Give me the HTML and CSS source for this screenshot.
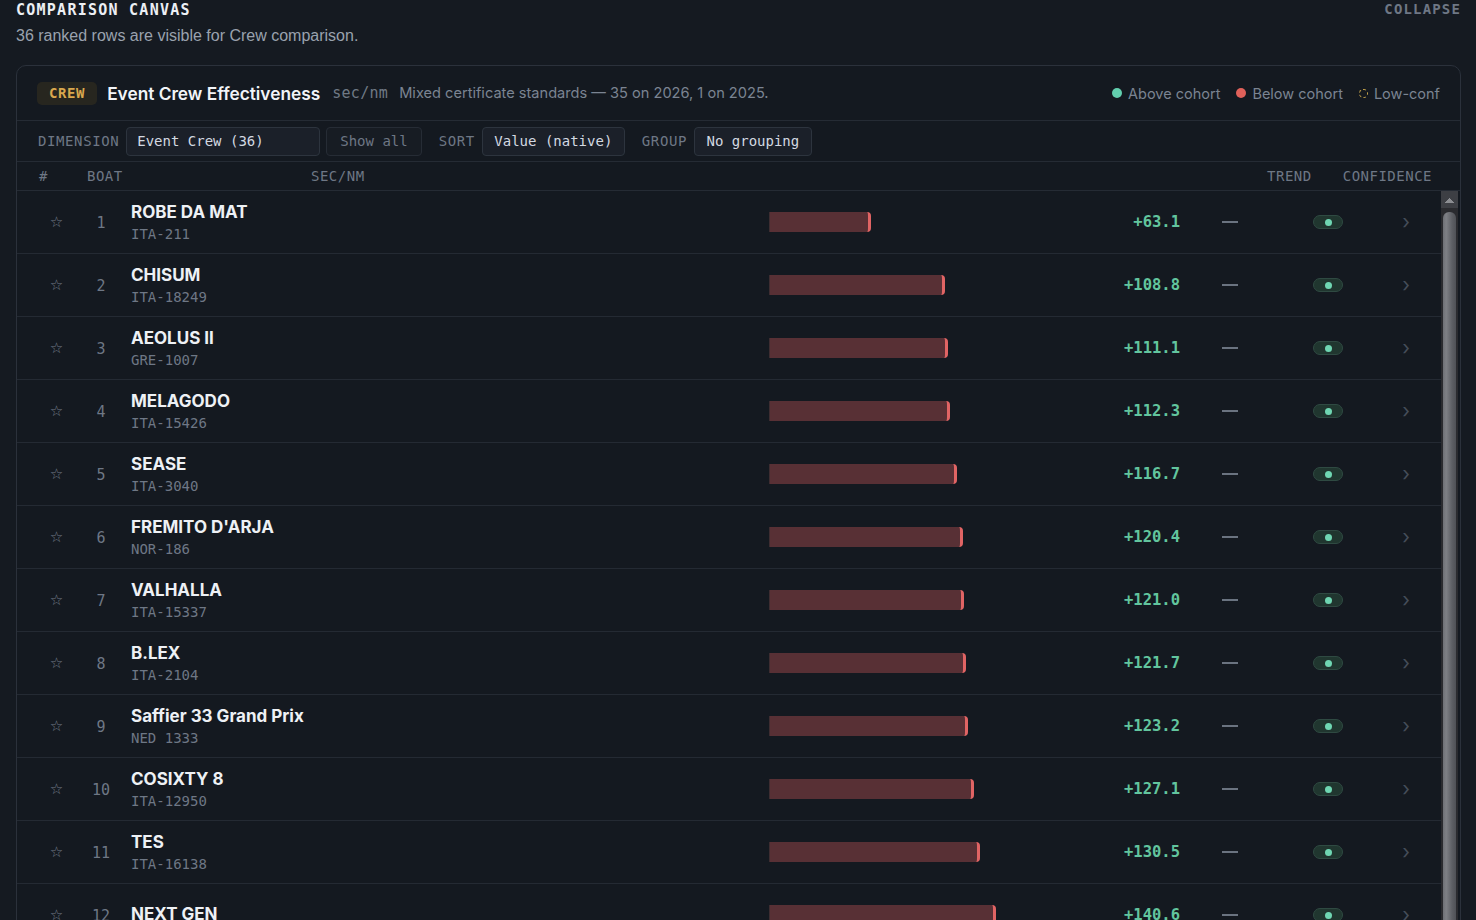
FILE: index.html
```html
<!DOCTYPE html>
<html lang="en">
<head>
    <meta charset="UTF-8">
    <meta name="viewport" content="width=device-width, initial-scale=1.0">
    <title>Comparison Canvas</title>
    <link rel="stylesheet" href="styles.css">
</head>
<body>
    <div class="canvas-head">
        <div>
            <h2 class="canvas-title">COMPARISON CANVAS</h2>
            <p class="canvas-sub">36 ranked rows are visible for Crew comparison.</p>
        </div>
        <button class="collapse">COLLAPSE</button>
    </div>

    <section class="card">
        <header class="card-head">
            <span class="badge">CREW</span>
            <h3 class="card-title">Event Crew Effectiveness</h3>
            <span class="unit">sec/nm</span>
            <span class="desc">Mixed certificate standards — 35 on 2026, 1 on 2025.</span>
            <div class="legend">
                <span class="legend-item"><i class="dot above"></i>Above cohort</span>
                <span class="legend-item"><i class="dot below"></i>Below cohort</span>
                <span class="legend-item"><i class="dot lowconf"></i>Low-conf</span>
            </div>
        </header>

        <div class="toolbar">
            <span class="tool-label">DIMENSION</span>
            <span class="tool-box wide">Event Crew (36)</span>
            <span class="tool-box muted">Show all</span>
            <span class="tool-label spaced">SORT</span>
            <span class="tool-box">Value (native)</span>
            <span class="tool-label spaced">GROUP</span>
            <span class="tool-box">No grouping</span>
        </div>

        <div class="cols">
            <span class="col-rank">#</span>
            <span class="col-boat">BOAT</span>
            <span class="col-metric">SEC/NM</span>
            <span class="col-trend">TREND</span>
            <span class="col-conf">CONFIDENCE</span>
        </div>

        <div class="list-wrap">
            <div class="rows" id="rows"></div>
            <div class="scrollbar">
                <span class="sb-up"></span>
                <span class="sb-thumb"></span>
            </div>
        </div>
    </section>

    <script>
        let boats = [
            ["ROBE DA MAT", "ITA-211", 63.1],
            ["CHISUM", "ITA-18249", 108.8],
            ["AEOLUS II", "GRE-1007", 111.1],
            ["MELAGODO", "ITA-15426", 112.3],
            ["SEASE", "ITA-3040", 116.7],
            ["FREMITO D'ARJA", "NOR-186", 120.4],
            ["VALHALLA", "ITA-15337", 121.0],
            ["B.LEX", "ITA-2104", 121.7],
            ["Saffier 33 Grand Prix", "NED 1333", 123.2],
            ["COSIXTY 8", "ITA-12950", 127.1],
            ["TES", "ITA-16138", 130.5],
            ["NEXT GEN", "", 140.6]
        ];

        let html = '';
        boats.forEach(function(b, i) {
            html += '<div class="row">' +
                '<span class="star">☆</span>' +
                '<span class="rank">' + (i + 1) + '</span>' +
                '<div class="boat"><div class="boat-name">' + b[0] + '</div><div class="boat-code">' + b[1] + '</div></div>' +
                '<div class="bar-cell"><span class="bar" style="width:' + (b[2] * 1.615).toFixed(0) + 'px"></span></div>' +
                '<span class="value">+' + b[2].toFixed(1) + '</span>' +
                '<span class="trend"><i></i></span>' +
                '<span class="conf"><i class="pill"><b></b></i></span>' +
                '<span class="chev">›</span>' +
                '</div>';
        });
        document.getElementById('rows').innerHTML = html;
    </script>
</body>
</html>
```

FILE: styles.css
```css
html, body {
    height: 100%;
    overflow: hidden;
}

body {
    margin: 0;
    padding: 0 15px 0 16px;
    background-color: #151a21;
    font-family: Inter, "Noto Sans", sans-serif;
    color: #e6eaf0;
}

/* top heading */
.canvas-head {
    display: flex;
    justify-content: space-between;
    align-items: flex-start;
    height: 65px;
}
.canvas-title {
    margin: 1px 0 0;
    font-family: "DejaVu Sans Mono", monospace;
    font-size: 15px;
    font-weight: bold;
    letter-spacing: 1.25px;
    line-height: 18px;
    color: #eceff4;
}
.canvas-sub {
    margin: 8px 0 0;
    font-family: "Liberation Sans", Arial, sans-serif;
    font-size: 16px;
    color: #9aa2ae;
}
.collapse {
    background: none;
    border: none;
    padding: 0;
    margin-top: 0;
    font-family: "DejaVu Sans Mono", monospace;
    font-size: 14px;
    font-weight: bold;
    letter-spacing: 1.15px;
    line-height: 18px;
    color: #6e7785;
    cursor: pointer;
}

/* card */
.card {
    border: 1px solid #2b313b;
    border-radius: 10px;
    background: #141920;
    height: 1100px;
    display: flex;
    flex-direction: column;
    overflow: hidden;
}
.card-head {
    display: flex;
    align-items: center;
    height: 54px;
    padding: 0 20px 0 20px;
    border-bottom: 1px solid #252b34;
}
.badge {
    background: #27261f;
    color: #d9a84e;
    font-family: "DejaVu Sans Mono", monospace;
    font-size: 14px;
    font-weight: bold;
    letter-spacing: 0.6px;
    line-height: 23px;
    padding: 0 12px;
    border-radius: 5px;
    margin-right: 10px;
}
.card-title {
    margin: 0 12px 0 0;
    font-size: 17.3px;
    font-weight: 600;
    color: #f1f4f8;
}
.unit {
    font-family: "DejaVu Sans Mono", monospace;
    font-size: 15px;
    letter-spacing: 0.3px;
    color: #707985;
    margin-right: 11px;
}
.desc {
    font-size: 14.6px;
    color: #7b8492;
}
.legend {
    margin-left: auto;
    display: flex;
    gap: 16px;
    font-size: 14.5px;
    color: #7b8492;
}
.legend-item {
    display: flex;
    align-items: center;
    gap: 6px;
}
.dot {
    width: 10px;
    height: 10px;
    border-radius: 50%;
}
.dot.above { background: #62cfae; }
.dot.below { background: #e0615a; }
.dot.lowconf {
    width: 7px;
    height: 7px;
    border: 1px dashed #c9a74c;
    background: none;
}

/* toolbar */
.toolbar {
    display: flex;
    align-items: center;
    height: 40px;
    padding: 0 20px 0 21px;
    border-bottom: 1px solid #252b34;
}
.tool-label {
    font-family: "DejaVu Sans Mono", monospace;
    font-size: 14px;
    letter-spacing: 0.6px;
    color: #6e7785;
    margin-right: 7px;
}
.tool-label.spaced {
    margin-left: 11px;
}
.tool-box {
    font-family: "DejaVu Sans Mono", monospace;
    font-size: 14px;
    color: #d3d9e1;
    background: #1b2029;
    border: 1px solid #2d343e;
    border-radius: 4px;
    height: 27px;
    line-height: 27px;
    padding: 0 11.5px;
    margin-right: 6px;
}
.tool-box.wide {
    width: 168px;
    padding-left: 10px;
    padding-right: 14px;
}
.tool-box.muted {
    background: #171c23;
    border-color: #262c35;
    color: #6e7785;
    padding: 0 13px;
}

/* column headings */
.cols {
    display: flex;
    align-items: center;
    height: 28px;
    padding: 0 28px 0 22px;
    border-bottom: 1px solid #252b34;
    font-family: "DejaVu Sans Mono", monospace;
    font-size: 14px;
    letter-spacing: 0.5px;
    color: #6e7785;
}
.col-rank { width: 48px; }
.col-boat { width: 224px; }
.col-metric { flex: 1; }
.col-trend { margin-right: 31px; }

/* rows + scrollbar */
.list-wrap {
    flex: 1;
    display: flex;
    min-height: 0;
}
.rows {
    flex: 1;
    overflow: hidden;
}
.scrollbar {
    width: 17px;
    margin-right: 2px;
    background: #2a2b2f;
    display: flex;
    flex-direction: column;
}
.sb-up {
    height: 17px;
    background:
        conic-gradient(from 135deg at 50% 30%, #8b8d91 0 90deg, transparent 90deg) no-repeat 3px 5px / 11px 7px,
        #3d3f44;
}
.sb-thumb {
    flex: 1;
    margin: 4px 2px 0;
    border-radius: 6px 6px 0 0;
    background: linear-gradient(90deg, #6e7075 0, #7e8085 25%, #5d5f64 70%, #4f5156 100%);
}

.row {
    display: grid;
    grid-template-columns: 36px 52px 1fr 300px 111px 100px 96px 60px;
    align-items: center;
    height: 62px;
    padding: 0 5px 0 21px;
    border-bottom: 1px solid #242a33;
}
.star {
    text-align: center;
    font-size: 15px;
    color: #737c89;
    font-family: "DejaVu Sans", sans-serif;
    padding-left: 1px;
}
.rank {
    text-align: center;
    font-family: "DejaVu Sans Mono", monospace;
    font-size: 15px;
    color: #6e7785;
    padding: 2px 0 0 2px;
}
.boat {
    padding-left: 5px;
}
.boat-name {
    font-size: 17px;
    font-weight: 700;
    line-height: 21px;
    color: #eef1f5;
}
.boat-code {
    font-family: "DejaVu Sans Mono", monospace;
    font-size: 14px;
    line-height: 18px;
    margin-top: 2px;
    color: #6e7785;
}
.bar-cell {
    display: flex;
    align-items: center;
}
.bar {
    display: block;
    height: 20px;
    background: #583035;
    border-left: 1px solid #3e2d31;
    border-right: 3px solid #e06464;
    border-radius: 0 4px 4px 0;
    box-sizing: border-box;
    margin-top: -1px;
}
.value {
    text-align: right;
    font-family: "DejaVu Sans Mono", monospace;
    font-size: 15.5px;
    font-weight: bold;
    color: #62c59e;
}
.trend {
    display: flex;
    justify-content: center;
}
.trend i {
    display: block;
    width: 16px;
    height: 2px;
    background: #6a7380;
}
.conf {
    display: flex;
    justify-content: center;
}
.pill {
    display: flex;
    align-items: center;
    justify-content: center;
    width: 28px;
    height: 12px;
    border-radius: 7px;
    background: #20362f;
    border: 1px solid #2f4a42;
}
.pill b {
    width: 7px;
    height: 7px;
    border-radius: 50%;
    background: #6fd6b2;
}
.chev {
    text-align: center;
    font-size: 20px;
    color: #454d59;
    line-height: 20px;
}
```
